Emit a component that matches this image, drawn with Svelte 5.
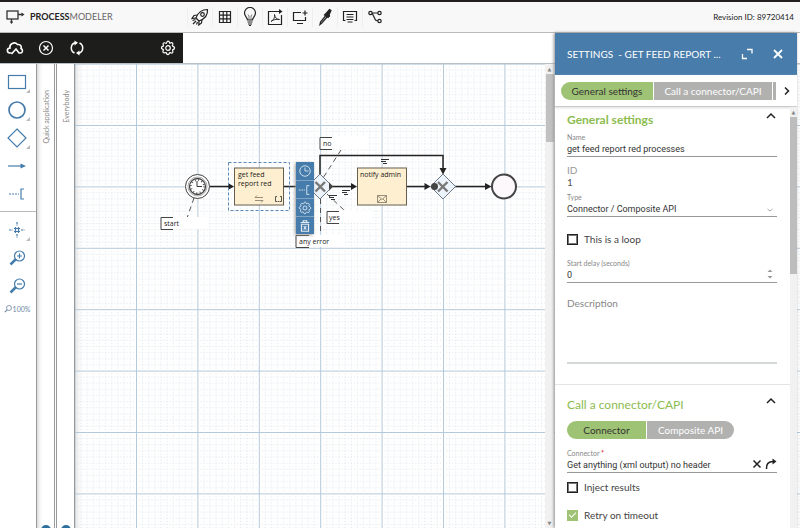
<script>
  let name = $state('get feed report red processes');
  let delay = $state(0);
  let connector = $state('Get anything (xml output) no header');
  let loop = $state(false);
  let inject = $state(false);
  let retry = $state(true);
  let description = $state('');
  const lanes = ['Quick application', 'Everybody'];
</script>

{#snippet gear()}
  <path d="M8 1.2c1.2 0 1.5 1 1.6 1.9 1 .2 1.800-1 2.900-.1 1 1 .3 1.900-.2 2.700.4.8 2 .6 2.300 2.100.1 1.500-1 1.800-2 2-.3 1 .9 1.800 0 2.900-1 1-1.900.3-2.700-.2-.8.4-.6 2-1.900 2.100-1.400 0-1.600-1.200-1.800-2-1-.3-1.900.9-2.900 0-1-1-.3-1.900.2-2.800-.4-.8-2-.5-2.100-1.900 0-1.400 1.200-1.600 2-1.800.3-1-.9-1.900 0-2.900 1-1 1.900-.3 2.800.2.8-.4.5-2.200 1.800-2.200z" />
  <circle cx="8" cy="8" r="2.300" />
{/snippet}

{#snippet caret()}
  <svg width="12" height="8" viewBox="0 0 12 8"><path d="M2 6l4-4 4 4" fill="none" stroke="#222" stroke-width="1.500" /></svg>
{/snippet}

<div class="app">
  <header>
    <div class="brand">
      <svg width="20" height="18" viewBox="0 0 20 18" fill="none" stroke="#333" stroke-width="1.300">
        <rect x="1" y="3" width="11" height="8" />
        <path d="M12 6.500h5M5.500 11v4" />
        <path d="M15.500 4.500l3 2-3 2zM3.700 13.500h3.600l-1.800 2.500z" fill="#333" stroke="none" />
      </svg>
      <span><b>PROCESS</b>MODELER</span>
    </div>
    <nav aria-label="Tools">
      <button aria-label="Launch">
        <svg width="18" height="18" viewBox="0 0 18 18">
          <path d="M5 10C7 4.500 11 1.500 16.500 1.500 17 7 13.500 11 8 13z" />
          <circle cx="11.500" cy="6.500" r="1.800" />
          <path d="M6.500 7L3 7.500 1 10.500l4-.5M11 11.500l-.5 3.500L7.800 17 8 13M4.500 11.500l-3 1M5 13l-3 3M6.500 14l-1 2.500" />
        </svg>
      </button>
      <button aria-label="Table">
        <svg width="16" height="16" viewBox="0 0 16 16"><path d="M2.500 2.500h11v11h-11zM2.500 6.200h11M2.500 9.800h11M6.200 2.500v11M9.800 2.500v11" /></svg>
      </button>
      <button aria-label="Hints">
        <svg width="16" height="20" viewBox="0 0 16 20">
          <path d="M5.500 13c0-2.500-3-3.500-3-7a5.500 5.500 0 0 1 11 0c0 3.500-3 4.500-3 7z" />
          <path d="M5.500 15h5M6 17h4M7 18.500h2" />
          <path d="M7 13V9L6 7.500M9 13V9l1-1.500" stroke-width=".6" />
        </svg>
      </button>
      <button aria-label="Export PDF">
        <svg width="16" height="18" viewBox="0 0 16 18">
          <path d="M9 3.500H1.500v13h13V7M8 3.500h5" /><path d="M12 1l3.500 2.500L12 6z" fill="#222" stroke="none" />
          <path d="M4 13.500C7 12 8 9 7.500 6.500 8 10 10 11.500 12.500 11.500 9 11 6.500 11.500 4 13.500z" stroke-width=".9" />
        </svg>
      </button>
      <button aria-label="Add screen">
        <svg width="16" height="16" viewBox="0 0 16 16"><path d="M9 3.500H1.500v8h12V8M13 1.500v5M10.500 4h5M5 14.500h6" /></svg>
      </button>
      <button aria-label="Pick color">
        <svg width="14" height="18" viewBox="0 0 14 18">
          <path d="M8.500 5l3-3.500 1.500 1-1.800 4 .3 1.500-1.500 1.500L6.500 7z" fill="#222" />
          <path d="M7.500 8l-5 6-.5 2.500 1.800-1.500L9 9" />
        </svg>
      </button>
      <button aria-label="Form">
        <svg width="16" height="16" viewBox="0 0 16 16"><path d="M3.500 11.500H1.500V2.500h13v9h-2M4.500 5.500h7M4.500 8h7M4.500 10.500h7M5.500 13h5" /></svg>
      </button>
      <button aria-label="Flow">
        <svg width="16" height="16" viewBox="0 0 16 16"><circle cx="3.500" cy="4" r="1.700" /><circle cx="12.500" cy="4" r="1.700" /><circle cx="12.500" cy="12" r="1.700" /><path d="M5.200 4h5.600M5.200 4.300L8.500 11l2.300 1" /></svg>
      </button>
    </nav>
    <p>Revision ID: 89720414</p>
  </header>

  <div class="strip">
    <div class="actions">
      <button aria-label="Publish">
        <svg width="18" height="16" viewBox="0 0 18 16"><path d="M5.500 13H4C.5 13 .5 8 4 8c-1-4 4.500-7 7.500-3.500 4-.5 4 3 3.500 4 2.500 1 1.500 4.500-.5 4.500h-1.500L10 9l-4.500 5" stroke-width="1.600" /></svg>
      </button>
      <button aria-label="Cancel">
        <svg width="16" height="16" viewBox="0 0 16 16"><circle cx="8" cy="8" r="6.500" /><path d="M5.500 5.500l5 5M10.500 5.500l-5 5" stroke-width="1.500" /></svg>
      </button>
      <button aria-label="Refresh">
        <svg width="16" height="16" viewBox="0 0 16 16"><path d="M5.500 13A5.500 5.500 0 0 1 6 2.800M10.500 3A5.500 5.500 0 0 1 10 13.200" stroke-width="1.500" /><path d="M5.500 .5l3.500 2.300L5.500 5.500zM10.500 10.500v5L7 13z" fill="#fff" stroke="none" /></svg>
      </button>
      <button class="last" aria-label="Options">
        <svg width="16" height="16" viewBox="0 0 16 16">{@render gear()}</svg>
      </button>
    </div>
  </div>

  <main>
    <div class="palette">
      <button class="more" aria-label="Task"><svg width="20" height="20" viewBox="0 0 20 20"><rect x="1.500" y="3.500" width="17" height="13" /></svg></button>
      <button class="more" aria-label="Event"><svg width="20" height="20" viewBox="0 0 20 20"><circle cx="10" cy="10" r="8" stroke-width="1.700" /></svg></button>
      <button class="more" aria-label="Gateway"><svg width="20" height="20" viewBox="0 0 20 20"><path d="M10 1l9 9-9 9-9-9z" /></svg></button>
      <button aria-label="Connection"><svg width="20" height="20" viewBox="0 0 20 20"><path d="M1 10h14" /><path d="M13.500 7.500L19 10l-5.500 2.500z" fill="#467cab" stroke="none" /></svg></button>
      <button aria-label="Annotation"><svg width="20" height="20" viewBox="0 0 20 20"><path d="M2 10h10" stroke-dasharray="2 1" /><path d="M17 5h-3v10h3" /></svg></button>
      <hr />
      <button class="more" aria-label="Snap to grid"><svg width="20" height="20" viewBox="0 0 20 20"><path d="M8.500 7v6M11.500 7v6M7 8.500h6M7 11.500h6" /><path d="M10 2v4M10 14v4M2 10h4M14 10h4" stroke-dasharray="2.500 1" /></svg></button>
      <button aria-label="Zoom in"><svg width="20" height="20" viewBox="0 0 20 20"><circle cx="12.500" cy="8" r="5" /><path d="M10 8h5M12.500 5.500v5" /><path d="M9 11l-5.500 5.500" stroke-width="2.500" /></svg></button>
      <button aria-label="Zoom out"><svg width="20" height="20" viewBox="0 0 20 20"><circle cx="12.500" cy="8" r="5" /><path d="M10 8h5" /><path d="M9 11l-5.500 5.500" stroke-width="2.500" /></svg></button>
      <button class="reset"><svg width="8" height="8" viewBox="0 0 8 8"><circle cx="5" cy="3" r="2.500" stroke-width=".8" /><path d="M3.200 4.800L.8 7.200" /></svg>100%</button>
    </div>
    {#each lanes as lane}
      <div class="lane"><span>{lane}</span><i></i></div>
    {/each}

    <div class="canvas">
      <svg class="diagram" width="100%" height="100%">
        <defs>
          <pattern id="grid" x="61" y="61" width="61.400" height="61.400" patternUnits="userSpaceOnUse">
            {#each [1, 2, 3, 4, 5, 6, 7, 8, 9] as n}
              <path d="M{n * 6.14 + 0.3} 0v61.400M0 {n * 6.14 + 0.3}h61.400" stroke="#d5dfe8" stroke-width=".9" stroke-dasharray="1 2.070" />
            {/each}
            <path d="M.5 0v61.400M0 .5h61.400" stroke="#b4c9d9" />
          </pattern>
        </defs>
        <rect width="100%" height="100%" fill="url(#grid)" />
        <g transform="translate(-75 -64)">
          <g fill="none" stroke="#222" stroke-width="1.500">
            <path d="M210 186.500h20M284 186.500h14M326 186.500h26M320 178v-22.500h123v14M407 186.500h20M455 186.500h31" />
          </g>
          <path d="M228 183l6 3.500-6 3.500zM351 183l6 3.500-6 3.500zM424.500 183l6 3.500-6 3.500zM485 183l6.500 3.500-6.500 3.500zM439.500 168h7l-3.500 6.500zM329 182.500l4 4-4 4z" fill="#222" />
          <path d="M194 198l-7 20M341 150l-18 28M327 194l18 17M320.500 199v34" fill="none" stroke="#555" stroke-dasharray="5 4" />

          <g fill="#fff">
            <rect x="161" y="217" width="48" height="12" />
            <rect x="320" y="137" width="48" height="12" />
            <rect x="326" y="211" width="46" height="12" />
            <rect x="296" y="235" width="49" height="12" />
          </g>
          <path d="M173 217.500h-12v12h12M332 137.500h-12v12h12M339 211.500h-12v12h12M309 235.500h-13v12h13" fill="none" stroke="#444" />
          <g class="label">
            <text x="164" y="226">start</text><text x="323" y="146">no</text>
            <text x="329" y="220">yes</text><text x="299" y="244">any error</text>
          </g>

          <circle cx="197.500" cy="186.500" r="12" fill="#fff" stroke="#444" />
          <circle cx="197.500" cy="186.500" r="9.500" fill="#fff" stroke="#888" stroke-width=".7" />
          <circle cx="197.500" cy="186.500" r="8" fill="#fff" stroke="#444" stroke-width="1.300" />
          <circle cx="197.500" cy="186.500" r="6.500" fill="none" stroke="#444" stroke-width="2" stroke-dasharray=".8 2.600" />
          <path d="M197 181v5.500h5" fill="none" stroke="#333" />

          <rect x="228.500" y="162.500" width="61" height="48" fill="none" stroke="#5d8bb5" stroke-dasharray="3 2" />
          <rect x="234.500" y="168" width="49" height="37" fill="#fdefcf" stroke="#665f50" />
          <rect x="357.500" y="168" width="49" height="37" fill="#fdefcf" stroke="#665f50" />
          <g class="label">
            <text x="238" y="177">get feed</text><text x="238" y="186">report red</text><text x="360" y="177">notify admin</text>
          </g>
          <g fill="none" stroke="#8b8370" stroke-width=".9">
            <path d="M263 197.500h-8l2-2M255 200.500h8l-2 2" />
            <path d="M277 196.500h-1.500v5h1.500M280 196.500h1.500v5h-1.500M277.500 201.500h2" stroke="#444" />
            <path d="M377.500 195.500h9v7h-9zl4.500 4 4.500-4M377.500 202.500l3.500-3.500M386.500 202.500l-3.500-3.500" />
          </g>

          <path d="M320 174l12.500 12.500-12.500 12.500-12.500-12.500zM443 174l12.500 12.500-12.500 12.500-12.500-12.500z" fill="#edf3fa" stroke="#6b7785" />
          <path d="M315.500 182l9.500 9.500M325 182l-9.500 9.500M438 182l9.500 9.500M447.500 182l-9.500 9.500" stroke="#777" stroke-width="2.400" />
          <path d="M329 182.500l4 4-4 4z" fill="#444" />
          <circle cx="434.500" cy="186.500" r="3.500" fill="#444" />
          <circle cx="504" cy="186.500" r="12" fill="#fdf8fc" stroke="#444" stroke-width="2" />
          <path d="M381 159.500h8M381 161.500h5M383 163.500h4M342 190.500h8M342 192.500h5M344 194.500h4M329 195.500h8M329 197.500h5M331 199.500h4" stroke="#333" />
        </g>
      </svg>

      <div class="context">
        <button aria-label="Timer"><svg width="14" height="14" viewBox="0 0 16 16"><circle cx="8" cy="8" r="6" /><path d="M8 4v4h4" /></svg></button>
        <button aria-label="Note"><svg width="14" height="14" viewBox="0 0 16 16"><path d="M1 8h7" stroke-dasharray="2 1" /><path d="M13 3h-3v10h3" /></svg></button>
        <button aria-label="Configure"><svg width="14" height="14" viewBox="0 0 16 16">{@render gear()}</svg></button>
        <button aria-label="Delete"><svg width="14" height="14" viewBox="0 0 16 16"><path d="M3 4h10M6 4V2h4v2M4 6v8h8V6zM6.500 8l3 4M9.500 8l-3 4" stroke-width="1.400" /></svg></button>
      </div>
    </div>
  </main>

  <div class="vbar"><b>▲</b><i></i><b>▼</b></div>

  <aside>
    <div class="title">
      <h1>SETTINGS &nbsp;- GET FEED REPORT ...</h1>
      <button aria-label="Expand"><svg width="12" height="12" viewBox="0 0 12 12"><path d="M6 1.500h5v4M1.500 6v4.500h4.500" /></svg></button>
      <button aria-label="Close"><svg width="12" height="12" viewBox="0 0 12 12"><path d="M2 2l8 8M10 2l-8 8" stroke-width="1.800" /></svg></button>
    </div>
    <div class="tabs">
      <button class="tab on">General settings</button>
      <button class="tab wide">Call a connector/CAPI</button>
      <span class="peek"></span>
      <button class="next" aria-label="Next tab"><svg width="8" height="10" viewBox="0 0 8 10"><path d="M2 1.500L5.500 5 2 8.500" fill="none" stroke="#222" stroke-width="1.500" /></svg></button>
    </div>
    <div class="scroll">
      <form>
        <section class="general">
          <h2>General settings {@render caret()}</h2>
          <div class="field">
            <label for="name">Name</label>
            <input id="name" type="text" bind:value={name} />
          </div>
          <dl><dt>ID</dt><dd>1</dd></dl>
          <div class="field type">
            <label for="type">Type</label>
            <select id="type"><option>Connector / Composite API</option></select>
            <svg class="end" width="8" height="6" viewBox="0 0 8 6"><path d="M1.500 2L4 4l2.500-2" fill="none" stroke="#aaa" /></svg>
          </div>
          <label class="check loop"><input type="checkbox" bind:checked={loop} />This is a loop</label>
          <div class="field">
            <label for="delay">Start delay (seconds)</label>
            <input id="delay" type="number" bind:value={delay} />
            <svg class="end" width="8" height="10" viewBox="0 0 8 10"><path d="M1.500 3L4 .5 6.500 3zM1.500 7L4 9.500 6.500 7z" fill="#999" /></svg>
          </div>
          <div class="field area">
            <label for="description">Description</label>
            <textarea id="description" bind:value={description}></textarea>
          </div>
        </section>
        <section>
          <h2>Call a connector/CAPI {@render caret()}</h2>
          <div class="toggle">
            <button type="button" class="tab on">Connector</button>
            <button type="button" class="tab end-pill">Composite API</button>
          </div>
          <div class="field">
            <label for="connector">Connector <em>*</em></label>
            <input id="connector" type="text" bind:value={connector} />
            <span class="tools">
              <button type="button" aria-label="Clear"><svg width="10" height="10" viewBox="0 0 10 10"><path d="M1.500 1.500l7 7M8.500 1.500l-7 7" /></svg></button>
              <button type="button" aria-label="Open connector"><svg width="12" height="12" viewBox="0 0 12 12"><path d="M1.500 11C1 6 3.500 3.500 8 3.500" /><path d="M7.500 .5l4 3-4 3z" fill="#222" stroke="none" /></svg></button>
            </span>
          </div>
          <label class="check inject"><input type="checkbox" bind:checked={inject} />Inject results</label>
          <label class="check"><input type="checkbox" bind:checked={retry} />Retry on timeout</label>
        </section>
      </form>
      <div class="sbar"><b>▲</b><i></i></div>
    </div>
  </aside>
</div>

<style>
  :global(body) { margin: 0; overflow: hidden; }
  .app {
    position: relative;
    display: flex;
    flex-direction: column;
    height: 100vh;
    background: #fff;
    color: #333;
    font: 10px/12px Lato, "Open Sans", sans-serif;
  }
  .app * { box-sizing: border-box; }
  button {
    display: flex;
    align-items: center;
    justify-content: center;
    margin: 0;
    padding: 0;
    border: 0;
    background: none;
    color: inherit;
    font: inherit;
    flex: none;
  }
  button svg { fill: none; stroke: currentColor; display: block; flex: none; }
  header {
    display: flex;
    align-items: center;
    flex: none;
    height: 33px;
    border-top: 2px solid #231f20;
    border-bottom: 1px solid #bbb;
    background: #f8f8f8;
    padding-right: 6px;
  }
  .brand { display: flex; align-items: center; gap: 4px; width: 187px; padding-left: 6px; font-size: 9px; color: #666; }
  .brand b { color: #222; }
  nav { display: flex; flex: 1; color: #222; }
  nav button { width: 25px; height: 20px; border-left: 1px solid #eee; }
  nav svg { stroke-width: 1.2; }
  header p { margin: 0; font-size: 8px; color: #222; }
  .strip { flex: none; height: 31px; border-bottom: 1px solid #b8c0c5; }
  .actions { display: flex; align-items: center; width: 183px; height: 30px; padding: 0 7px 0 6px; background: #1d1d1b; color: #fff; gap: 14px; }
  .actions button { width: 17px; height: 17px; }
  .actions svg { stroke-width: 1.2; }
  .actions .last { margin-left: auto; }

  main { display: flex; flex: 1; min-height: 0; }
  .palette { display: flex; flex-direction: column; flex: none; width: 36px; padding-top: 4px; color: #467cab; }
  .palette button { position: relative; height: 28px; padding-right: 2px; }
  .palette svg { stroke-width: 1.2; }
  .palette hr { width: 100%; margin: 3px 0 4px; border: 0; border-top: 1px solid #bbb; }
  .palette .reset { height: 18px; gap: 1px; font-size: 7px; color: #6d87a3; }
  .more::after {
    content: "";
    position: absolute;
    right: 6px;
    bottom: 3px;
    border: 2px solid transparent;
    border-right-color: #bbb;
    border-bottom-color: #bbb;
  }
  .lane {
    display: flex;
    flex-direction: column;
    align-items: center;
    justify-content: space-between;
    flex: none;
    width: 19px;
    margin-right: 1px;
    padding-top: 26px;
    overflow: hidden;
    border: solid #999;
    border-width: 0 1px;
    box-shadow: inset 4px 0 5px -3px #ccc;
  }
  .lane + .lane { margin-right: 0; box-shadow: none; }
  .lane span { writing-mode: vertical-rl; transform: rotate(180deg); font-size: 7px; line-height: 10px; color: #888; white-space: nowrap; }
  .lane i { width: 10px; height: 10px; margin-bottom: -7px; border-radius: 5px; background: #2f6f9c; flex: none; }
  .canvas { position: relative; flex: 1; min-width: 0; box-shadow: inset 6px 0 6px -4px #ddd; }
  .diagram { display: block; }
  .label { font-family: "Open Sans", sans-serif; font-size: 7px; fill: #222; }
  .context { position: absolute; left: 221px; top: 98px; width: 18px; background: #467cab; color: #fff; box-shadow: -1px 1px 3px #999; }
  .context button { width: 18px; height: 18px; }
  .context svg { opacity: .85; }
  .context button + button { border-top: 1px solid #7fa4c6; }

  .vbar { position: absolute; right: 246px; top: 64px; bottom: 0; width: 9px; display: flex; flex-direction: column; align-items: center; background: #f1f1f1; }
  .vbar b, .sbar b { height: 10px; font-size: 5px; line-height: 10px; color: #888; font-family: "DejaVu Sans", sans-serif; }
  .vbar i { width: 8px; height: 68px; margin-bottom: auto; background: #c1c1c1; }

  aside {
    position: absolute;
    right: 3px;
    top: 33px;
    bottom: 0;
    width: 242px;
    display: flex;
    flex-direction: column;
    overflow: hidden;
    background: #fff;
    box-shadow: -1px 0 3px #888;
  }
  .title { display: flex; align-items: center; flex: none; height: 42px; padding: 0 12px; background: #487cab; color: #fff; }
  .title h1 { flex: 1; min-width: 0; margin: 0; font-size: 10px; font-weight: 400; white-space: nowrap; }
  .title button { width: 14px; height: 14px; margin-left: 17px; }
  .title svg { stroke-width: 1.300; }
  .tabs { display: flex; align-items: center; flex: none; height: 32px; padding-left: 6px; gap: 1px; border-bottom: 1px solid #ccc; box-shadow: 0 1px 2px #ddd; }
  .tab { height: 18px; background: #b1b1b0; color: #fff; white-space: nowrap; }
  .tab.on { background: #9fc374; color: #333; border-radius: 9px 0 0 9px; }
  .tabs .tab { width: 92px; }
  .tabs .wide { width: 118px; }
  .peek { width: 3px; height: 18px; background: #b1b1b0; }
  .next { flex: 1; }
  .scroll { display: flex; flex: 1; min-height: 0; }
  form { flex: 1; min-width: 0; }
  section { padding: 5px 13px 0 12px; }
  section + section { padding-top: 12px; }
  .general { border-bottom: 1px solid #e4e4e4; padding-bottom: 20px; }
  h2 { display: flex; justify-content: space-between; margin: 0; font-size: 12px; line-height: 16px; font-weight: 400; color: #8cbc4f; }
  .general h2 { font-weight: 700; }
  .field { position: relative; display: flex; flex-direction: column; border-bottom: 1px solid #999; padding-top: 5px; }
  .field label { font-size: 7px; line-height: 8px; color: #888; }
  .field em { color: #d22; font-weight: 700; }
  .field input, .field select, textarea {
    width: 100%;
    height: 15px;
    margin: 0;
    padding: 0;
    border: 0;
    outline: 0;
    appearance: none;
    background: none;
    color: #333;
    font: 9px/12px Roboto, sans-serif;
    resize: none;
  }
  input[type="number"] { -moz-appearance: textfield; appearance: textfield; }
  input::-webkit-inner-spin-button { appearance: none; }
  .end { position: absolute; right: 3px; bottom: 3px; }
  dl { margin: 7px 0 0; font-size: 10px; line-height: 12px; }
  dt { color: #999; }
  dd { margin: 0; color: #555; }
  .check { display: flex; align-items: center; gap: 6px; height: 12px; margin-top: 8px; color: #444; }
  .check input { display: grid; place-items: center; width: 11px; height: 11px; margin: 0; appearance: none; border: 1px solid #222; box-shadow: inset 0 0 0 1px #777; }
  .check input:checked { background: #9fc374; border-color: #9fc374; box-shadow: none; }
  .check input:checked::after { content: ""; width: 6px; height: 3px; margin-bottom: 2px; border: solid #fff; border-width: 0 0 1px 1px; transform: rotate(-45deg); }
  .loop { margin: 16px 0 9px; }
  .area { border-bottom: 2px solid #d5d8d8; padding-top: 14px; }
  .area label { font-size: 10px; line-height: 12px; }
  textarea { height: 53px; }
  .toggle { display: flex; gap: 1px; margin: 8px 0 5px; }
  .toggle .tab { width: 79px; }
  .toggle .end-pill { width: 87px; border-radius: 0 9px 9px 0; }
  .tools { position: absolute; right: 0; bottom: 2px; display: flex; align-items: center; gap: 3px; color: #222; }
  .tools svg { stroke-width: 1.500; }
  .inject + .check { margin-top: 16px; }
  .sbar { flex: none; width: 7px; display: flex; flex-direction: column; align-items: center; background: #f1f1f1; }
  .sbar i { width: 7px; height: 157px; background: #bdbdbd; }
</style>
